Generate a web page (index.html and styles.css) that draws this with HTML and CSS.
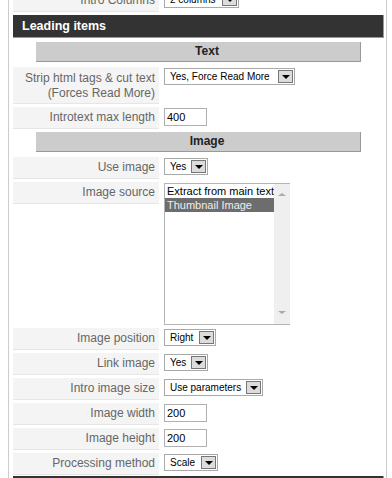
FILE: index.html
```html
<!DOCTYPE html>
<html lang="en">
<head>
    <meta charset="UTF-8">
    <title>Article Parameters - Leading items</title>
    <link rel="stylesheet" href="styles.css">
</head>
<body>

    <div class="panel">

        <div class="row">
            <div class="key">Intro Columns</div>
            <div class="value">
                <div class="sel sel-cols"><span class="sel-text">2 columns</span><span class="sel-btn"></span></div>
            </div>
        </div>

        <div class="section">Leading items</div>

        <div class="sub">Text</div>

        <div class="row">
            <div class="key key-tall">Strip html tags &amp; cut text<br>(Forces Read More)</div>
            <div class="value">
                <div class="sel sel-strip"><span class="sel-text">Yes, Force Read More</span><span class="sel-btn"></span></div>
            </div>
        </div>

        <div class="row">
            <div class="key">Introtext max length</div>
            <div class="value"><input class="txt" type="text" value="400"></div>
        </div>

        <div class="sub">Image</div>

        <div class="row">
            <div class="key">Use image</div>
            <div class="value">
                <div class="sel sel-yes"><span class="sel-text">Yes</span><span class="sel-btn"></span></div>
            </div>
        </div>

        <div class="row">
            <div class="key">Image source</div>
            <div class="value">
                <div class="list">
                    <div class="list-items">
                        <div class="opt">Extract from main text</div>
                        <div class="opt selected">Thumbnail Image</div>
                    </div>
                    <div class="scroll">
                        <span class="arrow-up"></span>
                        <span class="arrow-down"></span>
                    </div>
                </div>
            </div>
        </div>

        <div class="row">
            <div class="key">Image position</div>
            <div class="value">
                <div class="sel sel-right"><span class="sel-text">Right</span><span class="sel-btn"></span></div>
            </div>
        </div>

        <div class="row">
            <div class="key">Link image</div>
            <div class="value">
                <div class="sel sel-yes"><span class="sel-text">Yes</span><span class="sel-btn"></span></div>
            </div>
        </div>

        <div class="row">
            <div class="key">Intro image size</div>
            <div class="value">
                <div class="sel sel-size"><span class="sel-text">Use parameters</span><span class="sel-btn"></span></div>
            </div>
        </div>

        <div class="row">
            <div class="key">Image width</div>
            <div class="value"><input class="txt" type="text" value="200"></div>
        </div>

        <div class="row">
            <div class="key">Image height</div>
            <div class="value"><input class="txt" type="text" value="200"></div>
        </div>

        <div class="row">
            <div class="key">Processing method</div>
            <div class="value">
                <div class="sel sel-scale"><span class="sel-text">Scale</span><span class="sel-btn"></span></div>
            </div>
        </div>

        <div class="section section-next"></div>

    </div>

</body>
</html>
```

FILE: styles.css
```css
body {
    margin: 0;
    font-family: "Liberation Sans", Arial, sans-serif;
    font-size: 12px;
    color: #000;
    background: #fff;
    overflow: hidden;
}
.panel {
    margin: -10px 0 0 8px;
    width: 371px;
    padding: 0 2px 0 4px;
    border-left: 1px solid #ccc;
    border-right: 1px solid #ccc;
}
.row {
    display: flex;
    align-items: flex-start;
    gap: 5px;
    margin-bottom: 3px;
}
.key {
    flex: none;
    width: 146px;
    height: 22px;
    box-sizing: border-box;
    padding: 0 4px;
    background: #f4f4f4;
    border-bottom: 1px solid #e6e6e6;
    color: #666;
    text-align: right;
    line-height: 21px;
    white-space: nowrap;
}
.key-tall {
    height: auto;
    padding: 4px 4px 2px;
    line-height: 15px;
}
.value {
    padding-top: 1px;
}
.section {
    height: 22px;
    margin-bottom: 4px;
    padding-left: 9px;
    background: #333;
    border-right: 1px solid #999;
    border-bottom: 1px solid #999;
    color: #fff;
    font-size: 12.5px;
    font-weight: bold;
    line-height: 22px;
}
.section-next {
    margin-top: -2px;
}
.sub {
    height: 19px;
    margin: 0 23px 5px 23px;
    padding-left: 18px;
    background: #ccc;
    border-right: 1px solid #999;
    border-bottom: 1px solid #999;
    color: #222;
    font-weight: bold;
    text-align: center;
    line-height: 19px;
}

/* dropdowns */
.sel {
    display: flex;
    align-items: center;
    height: 17px;
    box-sizing: border-box;
    padding: 0 1px 0 5px;
    background: #fff;
    border: 1px solid #a9a9a9;
    font-size: 10px;
    white-space: nowrap;
}
.sel-text {
    flex: 1;
}
.sel-btn {
    flex: none;
    display: flex;
    justify-content: center;
    align-items: flex-end;
    width: 15px;
    height: 13px;
    box-sizing: border-box;
    padding-bottom: 3px;
    background: #dcdcdc;
    border: 1px solid #777;
}
.sel-btn::after {
    content: "";
    border-left: 4px solid transparent;
    border-right: 4px solid transparent;
    border-top: 4px solid #000;
}
.sel-cols { width: 75px; }
.sel-strip { width: 131px; }
.sel-yes { width: 44px; }
.sel-right { width: 52px; }
.sel-size { width: 99px; }
.sel-scale { width: 54px; }

.txt {
    display: block;
    width: 43px;
    height: 18px;
    box-sizing: border-box;
    margin: 0;
    padding: 0 2px;
    border: 1px solid #b0b0b0;
    font-family: "Liberation Sans", Arial, sans-serif;
    font-size: 11px;
    color: #000;
}

/* list box */
.list {
    display: flex;
    width: 126px;
    height: 142px;
    box-sizing: border-box;
    border: 1px solid #b4b4b4;
    background: #fff;
    font-size: 11px;
}
.list-items {
    flex: 1;
}
.opt {
    height: 14px;
    padding-left: 2px;
    line-height: 14px;
    white-space: nowrap;
}
.opt.selected {
    background: #6d6d6d;
    color: #eee;
}
.scroll {
    flex: none;
    display: flex;
    flex-direction: column;
    justify-content: space-between;
    align-items: center;
    width: 16px;
    padding: 9px 0 10px;
    box-sizing: border-box;
    background: #efefef;
}
.arrow-up {
    border-left: 4px solid transparent;
    border-right: 4px solid transparent;
    border-bottom: 3px solid #aaa;
}
.arrow-down {
    border-left: 4px solid transparent;
    border-right: 4px solid transparent;
    border-top: 3px solid #aaa;
}
```
